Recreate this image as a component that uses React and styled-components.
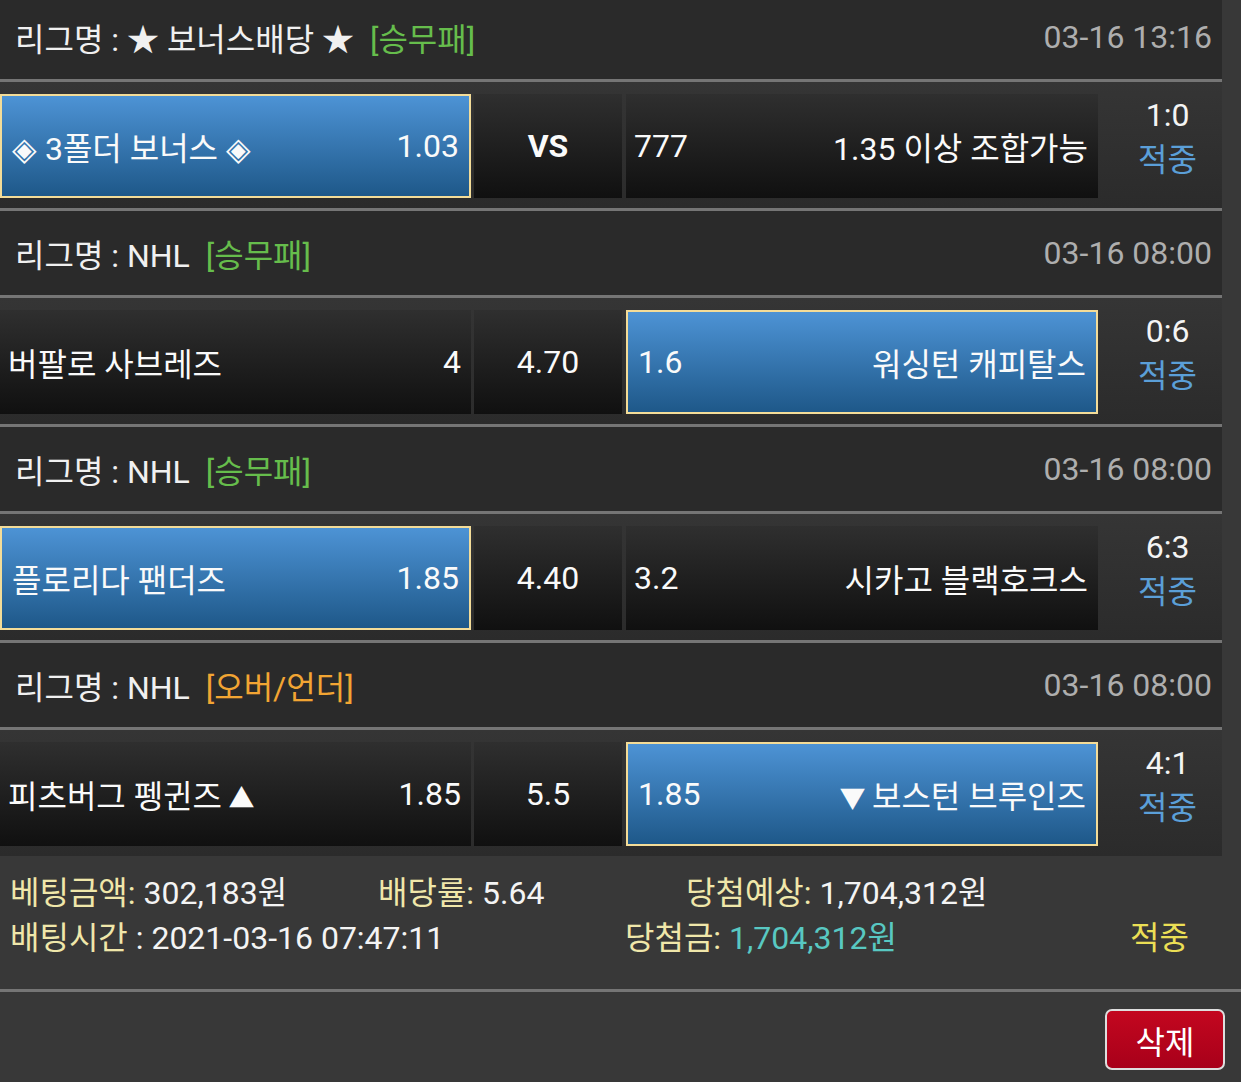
import React from "react";
import styled, { createGlobalStyle } from "styled-components";

const GlobalStyle = createGlobalStyle`
  body {
    margin: 0;
    background-color: #383838;
    font-family: Roboto, "Noto Sans CJK KR", "Noto Sans", sans-serif;
    color: #f2f2f2;
  }
`;

const Page = styled.div`
  width: 1241px;
  height: 1082px;
  overflow: hidden;
  background-color: #383838;
`;

const MatchList = styled.ul`
  margin: -5px 0 0;
  padding: 0;
  width: 1222px;
  list-style: none;
`;

const LeagueHeader = styled.div`
  height: 84px;
  display: flex;
  align-items: center;
  justify-content: space-between;
  padding: 0 10px 0 15px;
  background-color: #2a2a2a;
  border-bottom: 3px solid #757575;
  font-size: 32px;
`;

const LeagueName = styled.span`
  color: #f0f0f0;
  white-space: pre;
`;

const Market = styled.span`
  color: ${(props) => props.color};
`;

const MatchTime = styled.span`
  color: #aeaeae;
`;

const MatchRow = styled.div`
  height: 104px;
  padding: 12px 0 10px;
  display: flex;
  gap: 3px;
  background: linear-gradient(#353535, #2b2b2b);
  border-bottom: ${(props) => (props.last ? "none" : "3px solid #757575")};
`;

const TeamCell = styled.div`
  box-sizing: border-box;
  width: ${(props) => props.width}px;
  height: 104px;
  display: flex;
  align-items: center;
  justify-content: space-between;
  padding: 0 10px 0 ${(props) => (props.selected ? 10 : 8)}px;
  font-size: 32px;
  color: #fafafa;
  white-space: pre;
  background: ${(props) =>
    props.selected
      ? "linear-gradient(#4d93d5, #1e5889)"
      : "linear-gradient(#2f2f2f, #101010)"};
  border: ${(props) => (props.selected ? "2px solid #f3dc98" : "none")};
`;

const Arrow = styled.span`
  font-size: 26px;
`;

const MidCell = styled.div`
  width: 148px;
  height: 104px;
  display: flex;
  align-items: center;
  justify-content: center;
  margin-right: 1px;
  font-size: 32px;
  font-weight: ${(props) => (props.bold ? 700 : 400)};
  color: #fafafa;
  background: linear-gradient(#2f2f2f, #101010);
`;

const ScoreCell = styled.div`
  flex: 1;
  display: flex;
  flex-direction: column;
  align-items: center;
  justify-content: center;
  padding: 0 0 16px 12px;
  font-size: 32px;
  line-height: 45px;
`;

const Score = styled.span`
  color: #f4f4f4;
`;

const Result = styled.span`
  color: #5b9fd8;
`;

const Summary = styled.div`
  padding: 15px 0 28px 10px;
  font-size: 32px;
  line-height: 45px;
  white-space: pre;
`;

const SummaryRow = styled.div`
  display: flex;
`;

const SummaryItem = styled.span`
  width: ${(props) => (props.width ? `${props.width}px` : "auto")};
  flex-shrink: 0;
`;

const Label = styled.span`
  color: #f0e7aa;
`;

const Value = styled.span`
  color: ${(props) => props.color || "#f4f4f4"};
`;

const Divider = styled.hr`
  margin: 0;
  border: none;
  height: 3px;
  background-color: #757575;
`;

const Actions = styled.div`
  display: flex;
  justify-content: flex-end;
  padding: 17px 16px 0 0;
`;

const DeleteButton = styled.button`
  width: 120px;
  height: 61px;
  border: 2px solid #dedede;
  border-radius: 7px;
  background: linear-gradient(#c3071f, #a8001a);
  color: #fff;
  font-family: inherit;
  font-size: 32px;
  padding: 0;
`;

const matches = [
  {
    league: "★ 보너스배당 ★",
    market: "[승무패]",
    marketColor: "#66bd4c",
    time: "03-16 13:16",
    home: "◈ 3폴더 보너스 ◈",
    homeOdds: "1.03",
    mid: "VS",
    awayOdds: "777",
    away: "1.35 이상 조합가능",
    pick: "home",
    score: "1:0",
  },
  {
    league: "NHL",
    market: "[승무패]",
    marketColor: "#66bd4c",
    time: "03-16 08:00",
    home: "버팔로 사브레즈",
    homeOdds: "4",
    mid: "4.70",
    awayOdds: "1.6",
    away: "워싱턴 캐피탈스",
    pick: "away",
    score: "0:6",
  },
  {
    league: "NHL",
    market: "[승무패]",
    marketColor: "#66bd4c",
    time: "03-16 08:00",
    home: "플로리다 팬더즈",
    homeOdds: "1.85",
    mid: "4.40",
    awayOdds: "3.2",
    away: "시카고 블랙호크스",
    pick: "home",
    score: "6:3",
  },
  {
    league: "NHL",
    market: "[오버/언더]",
    marketColor: "#f2a533",
    time: "03-16 08:00",
    home: "피츠버그 펭귄즈",
    homeArrow: "▲",
    homeOdds: "1.85",
    mid: "5.5",
    awayOdds: "1.85",
    awayArrow: "▼",
    away: "보스턴 브루인즈",
    pick: "away",
    score: "4:1",
  },
];

function App() {
  return (
    <Page>
      <GlobalStyle />
      <MatchList>
        {matches.map((match, index) => (
          <li key={index}>
            <LeagueHeader>
              <LeagueName>
                {`리그명 : ${match.league}  `}
                <Market color={match.marketColor}>{match.market}</Market>
              </LeagueName>
              <MatchTime>{match.time}</MatchTime>
            </LeagueHeader>
            <MatchRow last={index === matches.length - 1}>
              <TeamCell width={471} selected={match.pick === "home"}>
                <span>
                  {match.home}
                  {match.homeArrow && <Arrow> {match.homeArrow}</Arrow>}
                </span>
                <span>{match.homeOdds}</span>
              </TeamCell>
              <MidCell bold={match.mid === "VS"}>{match.mid}</MidCell>
              <TeamCell width={472} selected={match.pick === "away"}>
                <span>{match.awayOdds}</span>
                <span>
                  {match.awayArrow && <Arrow>{match.awayArrow} </Arrow>}
                  {match.away}
                </span>
              </TeamCell>
              <ScoreCell>
                <Score>{match.score}</Score>
                <Result>적중</Result>
              </ScoreCell>
            </MatchRow>
          </li>
        ))}
      </MatchList>

      <Summary>
        <SummaryRow>
          <SummaryItem width={368}>
            <Label>베팅금액:</Label>
            <Value> 302,183원</Value>
          </SummaryItem>
          <SummaryItem width={308}>
            <Label>배당률:</Label>
            <Value> 5.64</Value>
          </SummaryItem>
          <SummaryItem>
            <Label>당첨예상:</Label>
            <Value> 1,704,312원</Value>
          </SummaryItem>
        </SummaryRow>
        <SummaryRow>
          <SummaryItem width={615}>
            <Label>배팅시간</Label>
            <Value> : 2021-03-16 07:47:11</Value>
          </SummaryItem>
          <SummaryItem width={505}>
            <Label>당첨금:</Label>
            <Value color="#58c8c2"> 1,704,312원</Value>
          </SummaryItem>
          <SummaryItem>
            <Value color="#ebdf55">적중</Value>
          </SummaryItem>
        </SummaryRow>
      </Summary>

      <Divider />
      <Actions>
        <DeleteButton>삭제</DeleteButton>
      </Actions>
    </Page>
  );
}

export default App;
